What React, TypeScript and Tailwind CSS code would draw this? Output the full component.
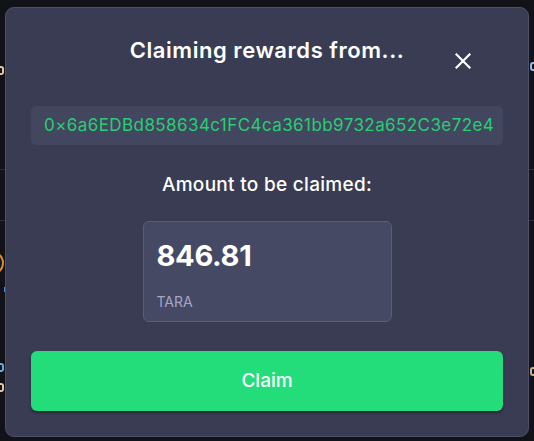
import React from "react";

export default function App() {
  return (
    <div
      className="relative w-[534px] h-[441px] bg-[#121319] overflow-hidden"
      style={{ fontFamily: "Inter, 'Noto Sans', sans-serif" }}
    >
      {/* underlying page hints */}
      <div className="flex flex-col w-full">
        <div className="h-[169px] relative">
          <div className="absolute left-0 top-[66px] w-[4px] h-[9px] rounded-r-[3px] border-2 border-l-0 border-[#e3c6a6]" />
          <div className="absolute right-0 top-[62px] w-[4px] h-[9px] rounded-l-[3px] border-2 border-r-0 border-[#9bb8d8]" />
        </div>
        <div className="h-[51px] border-t border-[#2a2c37]" />
        <div className="h-[221px] border-t border-[#2a2c37] relative">
          <div className="absolute left-[-20px] top-[30px] w-[24px] h-[24px] rounded-full border-2 border-[#d98a2b]" />
          <div className="absolute left-[4px] top-[66px] w-[2px] h-[5px] bg-[#4a8fd6]" />
          <div className="absolute left-0 top-[142px] w-[4px] h-[9px] rounded-r-[3px] border-2 border-l-0 border-[#6fa8dc]" />
          <div className="absolute left-0 top-[162px] w-[4px] h-[9px] rounded-r-[3px] border-2 border-l-0 border-[#e3c6a6]" />
          <div className="absolute right-0 top-[146px] w-[4px] h-[9px] rounded-l-[3px] border-2 border-r-0 border-[#c9b08a]" />
        </div>
      </div>

      {/* modal */}
      <div className="absolute left-[5px] top-[7px] w-[524px] h-[430px] rounded-[9px] border border-[#4d5068] bg-[#393c52] flex flex-col items-center px-[25px]">
        <div className="relative w-full mt-[26px] h-[32px] flex items-center justify-center">
          <h2 className="text-[22px] leading-[32px] font-semibold text-white tracking-[0.55px]">
            Claiming rewards from...
          </h2>
          <button className="absolute right-[32px] top-[19px] w-[16px] h-[16px] flex items-center justify-center">
            <svg width="16" height="16" viewBox="0 0 16 16" fill="none" stroke="white" strokeWidth="2.2" strokeLinecap="square">
              <path d="M1.5 1.5 L14.5 14.5 M14.5 1.5 L1.5 14.5" />
            </svg>
          </button>
        </div>

        <div className="mt-[40px] w-full h-[39px] rounded-[5px] bg-[#43465f] flex items-center px-[13px]">
          <span className="text-[17px] text-[#26cf74] whitespace-nowrap tracking-[0.42px]">
            0×6a6EDBd858634c1FC4ca361bb9732a652C3e72e4
          </span>
        </div>

        <div className="mt-[26px] h-[28px] text-[19px] leading-[28px] font-medium text-white tracking-[0.3px]">
          Amount to be claimed:
        </div>

        <div className="mt-[22px] w-[249px] h-[101px] rounded-[6px] border border-[#5a5e7a] bg-[#464963] flex flex-col px-[13px]">
          <div className="mt-[17px] text-[29px] leading-[34px] font-bold text-white tracking-[-0.3px]">846.81</div>
          <div className="mt-[20px] text-[14px] leading-[18px] text-[#a3a7c4]">TARA</div>
        </div>

        <button className="mt-[29px] w-full h-[60px] rounded-[6px] bg-[#23dd7a] shadow-[0_2px_3px_rgba(0,0,0,0.35)] flex items-center justify-center text-[19px] font-medium text-white">
          Claim
        </button>
      </div>
    </div>
  );
}
